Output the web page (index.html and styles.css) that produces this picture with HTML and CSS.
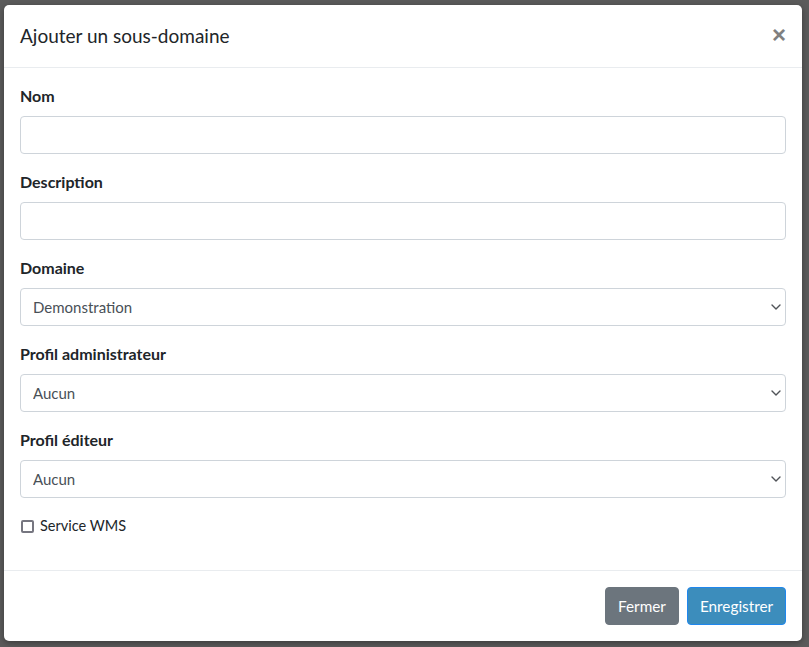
FILE: index.html
```html
<!DOCTYPE html>
<html lang="fr">
<head>
<meta charset="utf-8">
<title>Ajouter un sous-domaine</title>
<link rel="stylesheet" href="styles.css">
</head>
<body>
<div class="backdrop">
  <div class="modal">
    <div class="modal-header">
      <h5 class="modal-title">Ajouter un sous-domaine</h5>
      <button type="button" class="close" aria-label="Fermer">×</button>
    </div>
    <div class="modal-body">
      <div class="form-group">
        <label class="label">Nom</label>
        <input class="form-control" type="text">
      </div>
      <div class="form-group">
        <label class="label">Description</label>
        <input class="form-control" type="text">
      </div>
      <div class="form-group">
        <label class="label">Domaine</label>
        <div class="select-wrap">
          <select class="form-control"><option>Demonstration</option></select>
          <svg class="chevron" width="10" height="6" viewBox="0 0 10 6"><path d="M1 1l4 4 4-4" fill="none" stroke="#505358" stroke-width="1.4" stroke-linecap="round" stroke-linejoin="round"/></svg>
        </div>
      </div>
      <div class="form-group">
        <label class="label">Profil administrateur</label>
        <div class="select-wrap">
          <select class="form-control"><option>Aucun</option></select>
          <svg class="chevron" width="10" height="6" viewBox="0 0 10 6"><path d="M1 1l4 4 4-4" fill="none" stroke="#505358" stroke-width="1.4" stroke-linecap="round" stroke-linejoin="round"/></svg>
        </div>
      </div>
      <div class="form-group">
        <label class="label">Profil éditeur</label>
        <div class="select-wrap">
          <select class="form-control"><option>Aucun</option></select>
          <svg class="chevron" width="10" height="6" viewBox="0 0 10 6"><path d="M1 1l4 4 4-4" fill="none" stroke="#505358" stroke-width="1.4" stroke-linecap="round" stroke-linejoin="round"/></svg>
        </div>
      </div>
      <div class="form-group check-row">
        <span class="checkbox"></span>
        <span class="check-label">Service WMS</span>
      </div>
    </div>
    <div class="modal-footer">
      <button type="button" class="btn btn-secondary">Fermer</button>
      <button type="button" class="btn btn-primary">Enregistrer</button>
    </div>
  </div>
</div>
</body>
</html>
```
FILE: styles.css
```css
* { box-sizing: border-box; }
html, body { margin: 0; padding: 0; }
body {
  font-family: Lato, "Noto Sans", sans-serif;
  font-size: 15px;
  color: #212529;
  background: #5b5b5b;
}
.backdrop {
  width: 809px;
  height: 647px;
  padding: 5px 7px 6px 4px;
  background: #5b5b5b;
}
.modal {
  width: 798px;
  height: 636px;
  background: #fff;
  border-radius: 5px;
  box-shadow: 0 2px 6px rgba(0,0,0,0.35);
  display: flex;
  flex-direction: column;
}
.modal-header {
  flex: none;
  display: flex;
  align-items: center;
  justify-content: space-between;
  padding: 16px;
  height: 63px;
  border-bottom: 1px solid #e9ecef;
}
.modal-title {
  margin: 0;
  font-size: 19px;
  font-weight: 400;
  line-height: 24px;
  color: #212529;
}
.close {
  border: 0;
  background: transparent;
  padding: 0;
  margin-right: 0;
  margin-top: -2px;
  font-family: "Liberation Sans", Arial, sans-serif;
  font-size: 24px;
  font-weight: 700;
  line-height: 24px;
  color: #808080;
  cursor: pointer;
}
.modal-body {
  flex: 1;
  padding: 16px;
}
.form-group {
  margin-bottom: 16px;
  display: flex;
  flex-direction: column;
}
.label {
  font-weight: 700;
  line-height: 24px;
  margin-bottom: 8px;
  font-size: 16px;
}
.form-control {
  width: 100%;
  height: 38px;
  padding: 6px 12px;
  font-family: inherit;
  font-size: 15px;
  line-height: 24px;
  color: #495057;
  background: #fff;
  border: 1px solid #ced4da;
  border-radius: 4px;
}
.select-wrap {
  position: relative;
}
select.form-control {
  -webkit-appearance: none;
  appearance: none;
  padding-left: 12px;
  padding-right: 28px;
  display: block;
}
.chevron {
  position: absolute;
  right: 5px;
  top: 16px;
  pointer-events: none;
}
.check-row {
  flex-direction: row;
  align-items: center;
  height: 24px;
}
.checkbox {
  width: 13px;
  height: 13px;
  margin-left: 1px;
  border: 2px solid #767680;
  border-radius: 2px;
  background: #fff;
}
.check-label {
  margin-left: 6px;
  font-size: 14.5px;
  line-height: 24px;
}
.modal-footer {
  flex: none;
  display: flex;
  justify-content: flex-end;
  align-items: center;
  padding: 12px;
  border-top: 1px solid #e9ecef;
  gap: 8px;
  height: 71px;
}
.btn {
  height: 38px;
  padding: 6px 10px;
  font-family: inherit;
  font-size: 15.3px;
  line-height: 24px;
  border-radius: 4px;
  border: 1px solid transparent;
  color: #fff;
  cursor: pointer;
}
.btn-secondary {
  background: #6c757d;
  border-color: #6c757d;
  width: 74px;
}
.btn-primary {
  background: #3c8dbc;
  border-color: #1f87ee;
  width: 99px;
  margin-right: 4px;
}
```
